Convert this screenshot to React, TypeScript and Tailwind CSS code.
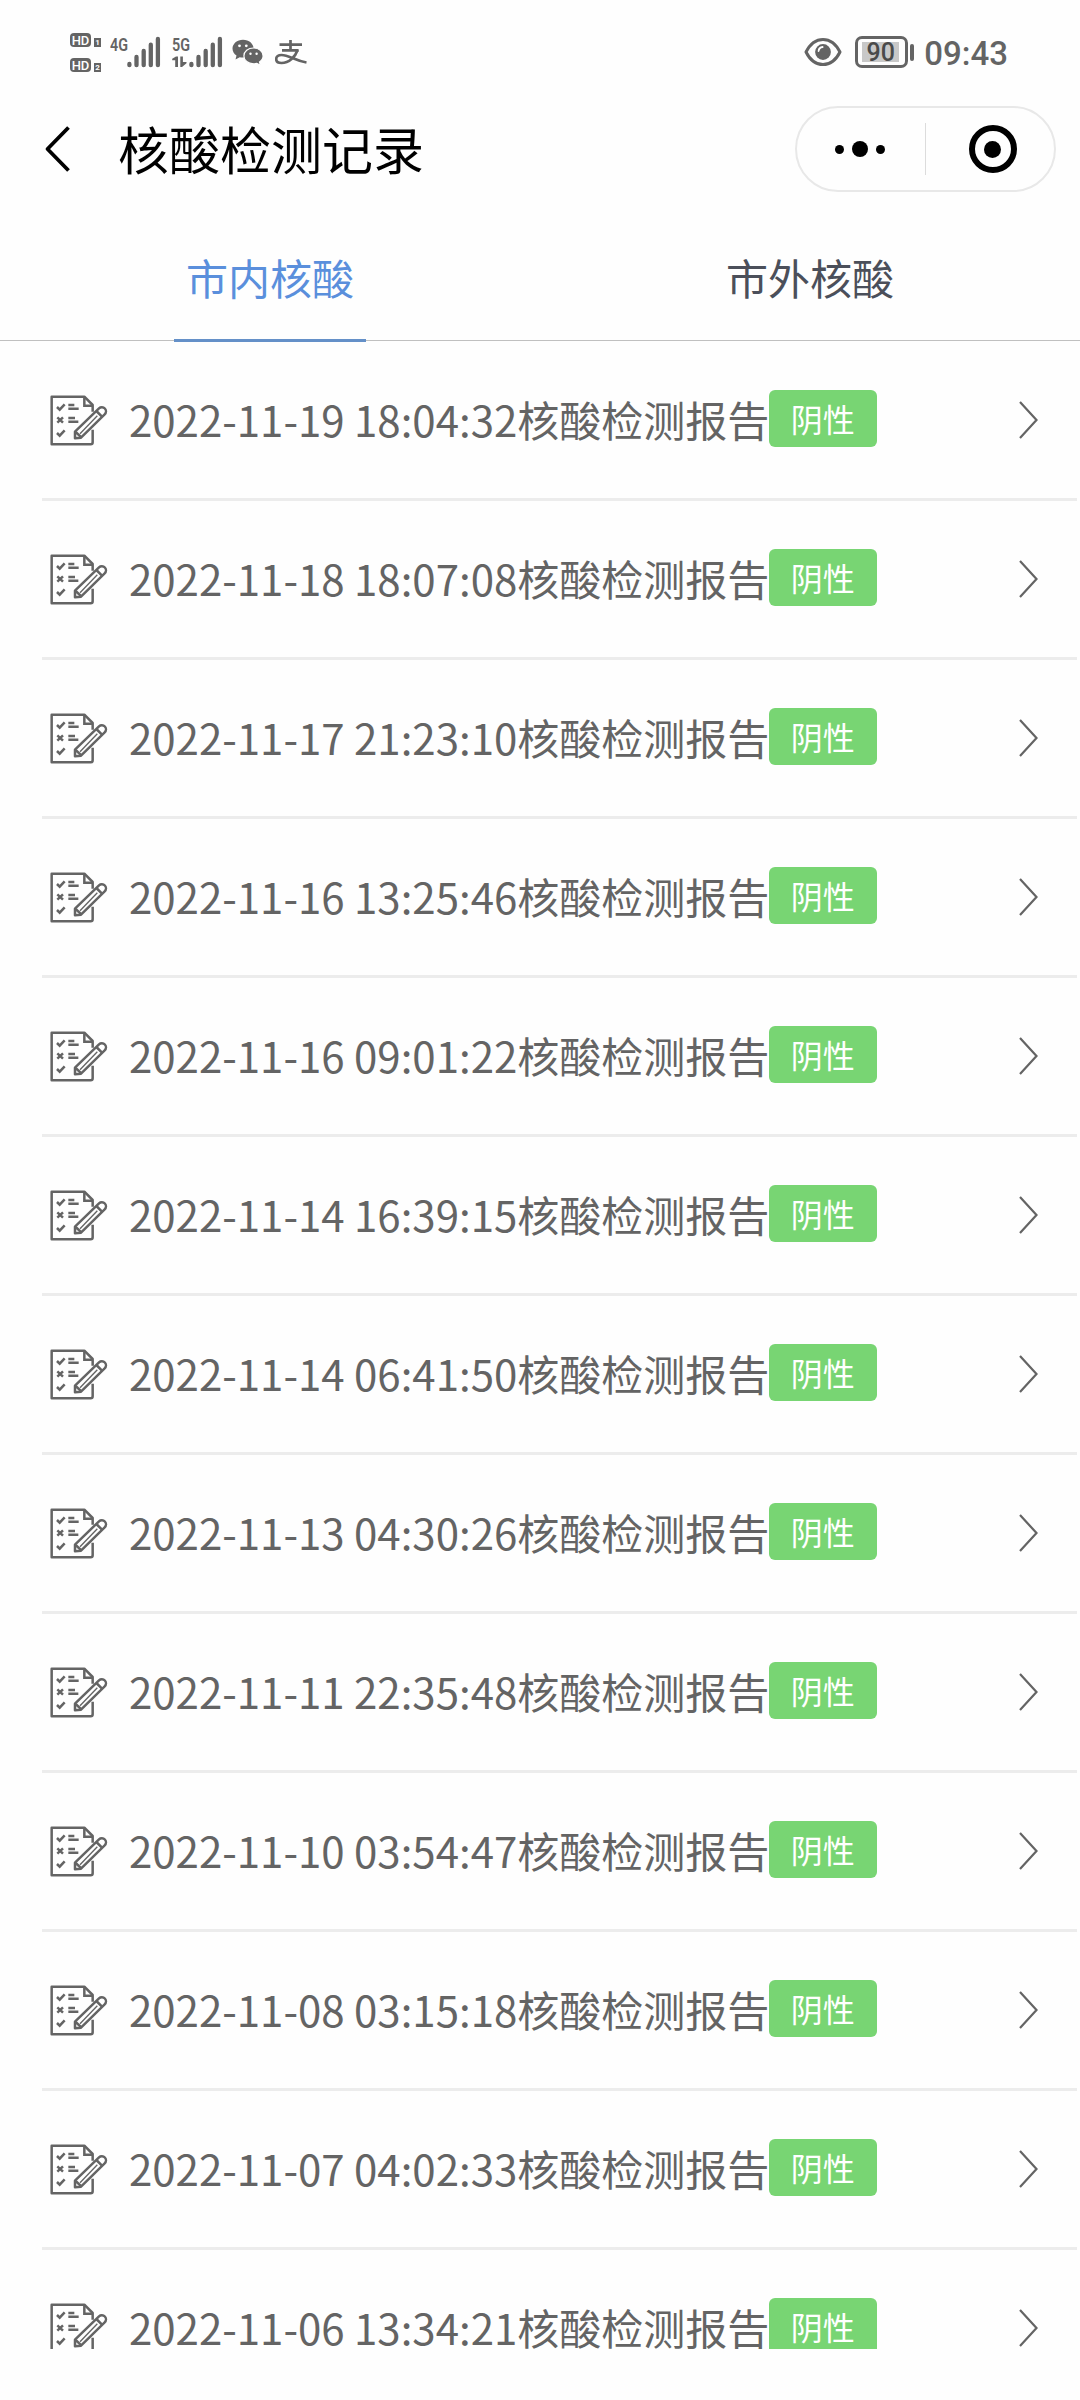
import React from "react";

// =======================
// TYPES
// =======================
interface TestRecord {
  time: string;
  result: string;
}

const records: TestRecord[] = [
  { time: "2022-11-19 18:04:32", result: "阴性" },
  { time: "2022-11-18 18:07:08", result: "阴性" },
  { time: "2022-11-17 21:23:10", result: "阴性" },
  { time: "2022-11-16 13:25:46", result: "阴性" },
  { time: "2022-11-16 09:01:22", result: "阴性" },
  { time: "2022-11-14 16:39:15", result: "阴性" },
  { time: "2022-11-14 06:41:50", result: "阴性" },
  { time: "2022-11-13 04:30:26", result: "阴性" },
  { time: "2022-11-11 22:35:48", result: "阴性" },
  { time: "2022-11-10 03:54:47", result: "阴性" },
  { time: "2022-11-08 03:15:18", result: "阴性" },
  { time: "2022-11-07 04:02:33", result: "阴性" },
  { time: "2022-11-06 13:34:21", result: "阴性" },
];

// =======================
// STATUS BAR ICONS
// =======================
function HdBadge({ sim }: { sim: string }) {
  return (
    <div className="flex items-end gap-[3px] h-[14px] leading-none text-white font-['Roboto',sans-serif]">
      <span className="flex items-center justify-center w-[21px] h-[14px] rounded-[4px] bg-[#646464] text-[13px] font-medium">HD</span>
      <span className="flex items-center justify-center w-[7px] h-[9px] bg-[#646464] text-[8px] font-bold">{sim}</span>
    </div>
  );
}

function Signal({ label, data }: { label: string; data?: boolean }) {
  return (
    <svg width="52" height="34" viewBox="0 0 52 34" className="shrink-0" fill="#646464">
      <text x="0" y="15.8" fontSize="18.5" fontWeight="600" textLength="18" lengthAdjust="spacingAndGlyphs" className="font-['Roboto',sans-serif]">
        {label}
      </text>
      {data && (
        <path d="M4 21.5h2V32H3.2v-6.8H0.2v-1.4ZM8.3 21.5h2.6V27h3.6v1.2L10 32H8.3Z" />
      )}
      <g stroke="#646464" strokeWidth="4.3" strokeLinecap="round">
        <path d="M19.4 29v1.2M26.5 22v8.2M33.7 16v14.2M40.8 9.7v20.5M47.9 4v26.2" />
      </g>
    </svg>
  );
}

function WechatIcon() {
  return (
    <svg width="32" height="27" viewBox="0 0 32 27" className="shrink-0">
      <path d="M11 0.7C5 0.7 0.5 4.7 0.5 9.6c0 2.9 1.5 5.4 4 7L3.5 20.4l4.2-2.2c1.1.3 2.2.4 3.3.4 6 0 10.6-4 10.6-9S17 0.7 11 0.7Z" fill="#646464" />
      <circle cx="7.5" cy="6.8" r="1.4" fill="#fff" />
      <circle cx="14.3" cy="6.8" r="1.4" fill="#fff" />
      <path d="M21.5 9c-5.4 0-9.6 3.5-9.6 7.9s4.2 7.9 9.6 7.9c1.2 0 2.3-.2 3.3-.5l3.6 1.9-.9-3.3c2.2-1.5 3.6-3.6 3.6-6 0-4.4-4.2-7.9-9.6-7.9Z" fill="#646464" stroke="#fff" strokeWidth="1.2" />
      <circle cx="18.5" cy="14.8" r="1.2" fill="#fff" />
      <circle cx="24.6" cy="14.8" r="1.2" fill="#fff" />
    </svg>
  );
}

function AlipayIcon() {
  return (
    <svg width="32" height="25" viewBox="0 0 32 25" className="shrink-0" fill="none" stroke="#646464" strokeWidth="2.7">
      <path d="M4.5 4.6H27M15.5 0v10M7 10.3H23.6" />
      <path d="M22.6 10C20.5 16.5 14 23 6.5 23c-3.4 0-5.3-1.7-5.3-4 0-2.4 2.2-4 5.3-4 7.5 0 13 5.5 25 7.5" />
    </svg>
  );
}

function EyeIcon() {
  return (
    <svg width="38" height="30" viewBox="0 0 38 30" className="shrink-0">
      <path d="M2 15C6 7 12 2.4 19 2.4S32 7 36 15C32 23 26 27.6 19 27.6S6 23 2 15Z" fill="none" stroke="#646464" strokeWidth="3" strokeLinejoin="round" />
      <circle cx="19" cy="15" r="7.9" fill="#646464" />
      <path d="M14.6 14a4.5 4.5 0 0 1 4-4" fill="none" stroke="#fff" strokeWidth="1.8" strokeLinecap="round" />
    </svg>
  );
}

function Battery({ level }: { level: string }) {
  return (
    <div className="flex items-center gap-[2px]">
      <div className="flex w-[53px] h-[32px] p-[3px] rounded-[7px] border-[3px] border-[#646464]">
        <div className="flex items-center justify-center w-[37px] h-[20px] ml-px text-[25px] leading-none font-medium text-[#4a4a4a] bg-[#c8c8c8] font-['Roboto',sans-serif]">
          {level}
        </div>
      </div>
      <div className="w-[4px] h-[17px] rounded-sm bg-[#646464]"></div>
    </div>
  );
}

function StatusBar() {
  return (
    <div className="flex items-center justify-between h-[104px] pl-[70px] pr-[72px]">
      <div className="flex items-center">
        <div className="flex flex-col gap-[11px] w-[40px] pt-px">
          <HdBadge sim="1" />
          <HdBadge sim="2" />
        </div>
        <div className="flex items-center gap-[10px]">
          <Signal label="4G" />
          <Signal label="5G" data />
        </div>
        <div className="flex items-center gap-[11px] ml-[8px]">
          <WechatIcon />
          <AlipayIcon />
        </div>
      </div>
      <div className="flex items-center">
        <EyeIcon />
        <div className="ml-[13px]">
          <Battery level="90" />
        </div>
        <span className="ml-[10px] pt-[3px] text-[33px] leading-none font-medium text-[#646464] font-['Roboto',sans-serif]">09:43</span>
      </div>
    </div>
  );
}

// =======================
// NAV BAR
// =======================
function NavBar() {
  return (
    <div className="flex items-center h-[90px] pl-[44px] pr-[24px] text-black">
      <svg width="28" height="50" viewBox="0 0 28 50" fill="none" stroke="currentColor" strokeWidth="3.8">
        <path d="M24.5 3.5 3.5 25l21 21.5" strokeLinejoin="round" />
      </svg>
      <h1 className="ml-[46px] pb-px text-[51px] leading-none">核酸检测记录</h1>
      <div className="flex items-center w-[261px] h-[86px] ml-auto rounded-full border-2 border-[#e8e8e8]">
        <div className="flex items-center justify-center gap-[8px] w-[128px] pr-[2px]">
          <span className="w-[9px] h-[9px] rounded-full bg-black"></span>
          <span className="w-[16px] h-[16px] rounded-full bg-black"></span>
          <span className="w-[9px] h-[9px] rounded-full bg-black"></span>
        </div>
        <div className="w-px h-[52px] bg-[#dcdcdc]"></div>
        <div className="flex flex-1 items-center justify-center pl-[5px]">
          <span className="flex items-center justify-center w-[48px] h-[48px] rounded-full border-[6px] border-black">
            <span className="w-[17px] h-[17px] rounded-full bg-black"></span>
          </span>
        </div>
      </div>
    </div>
  );
}

// =======================
// TABS
// =======================
function Tabs() {
  return (
    <div className="grid grid-cols-2 h-[148px] text-[42px] leading-none bg-[linear-gradient(#c0c0c0,#c0c0c0)] bg-no-repeat bg-[length:100%_1px] bg-[position:0_146px]">
      <div className="flex flex-col items-center justify-between pt-[62px]">
        <span className="text-[#5a8fdc]">市内核酸</span>
        <div className="w-[192px] h-[3px] bg-[#6490c8]"></div>
      </div>
      <div className="flex flex-col items-center pt-[62px]">
        <span className="text-[#4b4f5a]">市外核酸</span>
      </div>
    </div>
  );
}

// =======================
// RECORD ROW
// =======================
function ReportIcon() {
  return (
    <svg width="58" height="51" viewBox="30 30 174 153" className="shrink-0" fill="none" stroke="#646464" strokeWidth="7.5">
      <path d="M158 80V60L133 35H35V178H152Q158 178 158 172V134" strokeLinejoin="round" />
      <path d="M133 35V62H158" />
      <path d="M51 66l8 8 15-16M52 97l17 16M69 97l-17 16M51 144l8 8 15-16" />
      <path d="M85 60h18M85 71h31M85 99h20M85 110h30" />
      <path d="M105 160V140L177 70a12 12 0 0 1 17 18L123 158Z" fill="#fff" strokeLinejoin="round" />
      <path d="M107 141l17 16M169 78l17 17" />
      <path d="M120 146L172 92" strokeWidth="4" />
    </svg>
  );
}

function RecordRow({ time, result }: TestRecord) {
  return (
    <div className="flex items-center shrink-0 h-[159px] pl-[8px] pr-[38px] border-b-3 border-[#ececec]">
      <ReportIcon />
      <span className="ml-[21px] pb-[3px] text-[42px] leading-none text-[#646464] whitespace-nowrap">{time}核酸检测报告</span>
      <span className="flex items-center justify-center w-[108px] h-[57px] mb-[3px] pr-px pb-[2px] rounded-md bg-[#78d573] text-[32px] leading-none text-white">{result}</span>
      <svg width="20" height="38" viewBox="0 0 20 38" className="ml-auto" fill="none" stroke="#646464" strokeWidth="2.2">
        <path d="M1 1l16.5 18L1 37" />
      </svg>
    </div>
  );
}

// =======================
// MAIN COMPONENT
// =======================
export default function App() {
  return (
    <div className="w-[1080px] h-[2400px] overflow-hidden bg-[#fefefe] font-['Noto_Sans_CJK_SC',sans-serif]">
      <StatusBar />
      <NavBar />
      <Tabs />
      <div className="flex flex-col h-[2007px] ml-[42px] mr-[3px] overflow-hidden">
        {records.map((item) => (
          <RecordRow key={item.time} time={item.time} result={item.result} />
        ))}
      </div>
    </div>
  );
}
